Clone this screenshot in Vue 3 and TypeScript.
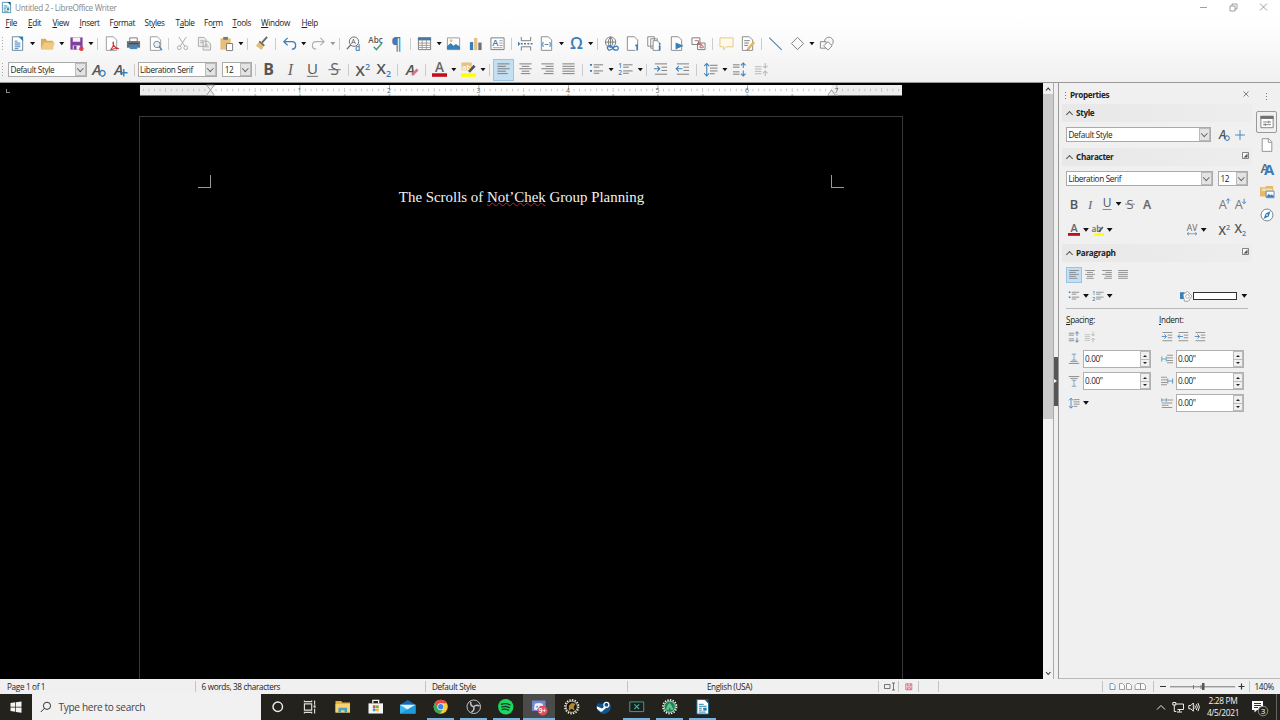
<template>
  <div class="desktop">
    <header class="chrome">
      <div class="title-bar">
        <svg class="app-icon" viewBox="0 0 16 16" v-html="icons.writer"></svg>
        <span class="title">Untitled 2 - LibreOffice Writer</span>
        <div class="window-buttons">
          <svg viewBox="0 0 10 10"><path d="M2 5.500h7" /></svg>
          <svg viewBox="0 0 10 10"><path d="M2 4h5v5h-5zM4 4V2h5v5H7" /></svg>
          <svg viewBox="0 0 10 10"><path d="M2 1.500l7 7M9 1.500l-7 7" /></svg>
        </div>
      </div>

      <nav class="menu-bar">
        <span v-for="menu in menus" :key="menu.label" :style="{ width: `${menu.width}px` }">
          {{ menu.label.slice(0, menu.key) }}<u>{{ menu.label[menu.key] }}</u>{{ menu.label.slice(menu.key + 1) }}
        </span>
      </nav>

      <div class="toolbar">
        <i class="grip"></i>
        <template v-for="(item, index) in standardBar" :key="index">
          <i v-if="item === '|'" class="separator"></i>
          <i v-else-if="item === 'v'" class="caret"></i>
          <i v-else-if="item === 'v-off'" class="caret off"></i>
          <button v-else class="tool"><svg viewBox="0 0 16 16" v-html="icons[item]"></svg></button>
        </template>
      </div>

      <div class="toolbar formatting">
        <i class="grip"></i>
        <div class="combo style-name"><span>Default Style</span><i></i></div>
        <button class="tool"><svg viewBox="0 0 16 16" v-html="icons.updateStyle"></svg></button>
        <button class="tool"><svg viewBox="0 0 16 16" v-html="icons.newStyle"></svg></button>
        <i class="separator"></i>
        <div class="combo font-name"><span>Liberation Serif</span><i></i></div>
        <div class="combo font-size"><span>12</span><i></i></div>
        <template v-for="(item, index) in formattingBar" :key="index">
          <i v-if="item === '|'" class="separator"></i>
          <i v-else-if="item === 'v'" class="caret"></i>
          <button v-else class="tool" :class="{ active: item === 'left' }">
            <svg viewBox="0 0 16 16" v-html="icons[item]"></svg>
          </button>
        </template>
      </div>
    </header>

    <main class="workspace">
      <section class="editor">
        <div class="ruler-row">
          <i class="tab-kind"></i>
          <svg class="ruler" width="762" height="12" viewBox="0 0 762 12">
            <rect width="762" height="10.500" fill="#ededed" />
            <rect x="70.500" width="621" height="10.500" fill="#fff" />
            <rect
              v-for="tick in ticks"
              :key="tick.x"
              :x="tick.x"
              :y="tick.top"
              width="0.800"
              :height="tick.height"
              :fill="tick.height > 4 ? '#999' : '#bdbdbd'"
            />
            <text v-for="n in 7" :key="n" :x="70 + n * inch" y="7.800">{{ n }}</text>
            <rect v-for="n in 14" :key="`t${n}`" :x="69.500 + n * inch / 2" y="9.500" width="2" height="1.500" fill="#999" />
            <path d="M66.500 0h8l-4 5zM66.500 10.500l4-5.500 4 5.500zM687.500 10.500l4-5.500 4 5.500z" fill="#eee" stroke="#888" stroke-width="0.800" />
          </svg>
        </div>
        <article class="page">
          <div class="margins"><i class="corner left"></i><i class="corner right"></i></div>
          <p class="paragraph">The Scrolls of <span class="misspelled">Not’Chek</span> Group Planning</p>
        </article>
      </section>

      <div class="scrollbar">
        <svg viewBox="0 0 10 10"><path d="M3 7l2.200-2.500L7.400 7" /></svg>
        <div class="thumb"></div>
        <div class="track"></div>
        <svg viewBox="0 0 10 10"><path d="M3 3.500l2.200 2.500 2.200-2.500" /></svg>
      </div>
      <div class="splitter"><i></i></div>

      <aside class="sidebar">
        <div class="deck-title"><i class="dots"></i><b>Properties</b><svg viewBox="0 0 8 8"><path d="M1.500 1.500l5 5M6.500 1.500l-5 5" /></svg></div>

        <h3><i class="chevron"></i>Style</h3>
        <div class="row fields">
          <div class="combo wide"><span>Default Style</span><i></i></div>
          <i class="spacer"></i>
          <button class="mini"><svg viewBox="0 0 16 16" v-html="icons.updateStyle"></svg></button>
          <button class="mini"><svg viewBox="0 0 16 16" v-html="icons.plus"></svg></button>
        </div>

        <h3 class="gap"><i class="chevron"></i>Character<svg class="launcher" viewBox="0 0 7 7" v-html="icons.launcher"></svg></h3>
        <div class="row fields">
          <div class="combo sidebar-font"><span>Liberation Serif</span><i></i></div>
          <i class="spacer"></i>
          <div class="combo font-size"><span>12</span><i></i></div>
        </div>
        <div v-for="(row, index) in characterRows" :key="index" class="row character">
          <template v-for="(item, i) in row" :key="i">
            <i v-if="item === ' '" class="spacer"></i>
            <i v-else-if="item === '_'" class="half"></i>
            <i v-else-if="item === 'v'" class="caret"></i>
            <button v-else class="mini"><svg viewBox="0 0 16 16" v-html="icons[item]"></svg></button>
          </template>
        </div>

        <h3 class="gap"><i class="chevron"></i>Paragraph<svg class="launcher" viewBox="0 0 7 7" v-html="icons.launcher"></svg></h3>
        <div class="row aligns">
          <button v-for="side in ['left', 'center', 'right', 'justify']" :key="side" class="mini" :class="{ active: side === 'left' }">
            <svg viewBox="0 0 16 16" v-html="icons[side]"></svg>
          </button>
        </div>
        <div class="row lists">
          <button class="mini"><svg viewBox="0 0 16 16" v-html="icons.bullets"></svg></button><i class="caret"></i>
          <button class="mini"><svg viewBox="0 0 16 16" v-html="icons.numbers"></svg></button><i class="caret"></i>
          <i class="spacer"></i>
          <button class="mini paint"><svg viewBox="0 0 16 16" v-html="icons.paint"></svg></button>
          <i class="swatch"></i>
          <i class="caret"></i>
        </div>
        <hr />
        <div class="columns">
          <div class="column">
            <label><u>S</u>pacing:</label>
            <div class="row steps">
              <button class="mini"><svg viewBox="0 0 16 16" v-html="icons.spaceUp"></svg></button>
              <button class="mini"><svg viewBox="0 0 16 16" v-html="icons.spaceDown"></svg></button>
            </div>
            <div v-for="icon in ['above', 'below']" :key="icon" class="row spin-row">
              <button class="mini"><svg viewBox="0 0 16 16" v-html="icons[icon]"></svg></button>
              <div class="spin"><span>0.00"</span><i></i></div>
            </div>
            <div class="row spin-row">
              <button class="mini"><svg viewBox="0 0 16 16" v-html="icons.lineSpacing"></svg></button><i class="caret"></i>
            </div>
          </div>
          <div class="column">
            <label><u>I</u>ndent:</label>
            <div class="row steps">
              <button v-for="(icon, i) in ['indent', 'outdent', 'indent']" :key="i" class="mini">
                <svg viewBox="0 0 16 16" v-html="icons[icon]"></svg>
              </button>
            </div>
            <div v-for="icon in ['before', 'after', 'firstLine']" :key="icon" class="row spin-row">
              <button class="mini"><svg viewBox="0 0 16 16" v-html="icons[icon]"></svg></button>
              <div class="spin"><span>0.00"</span><i></i></div>
            </div>
          </div>
        </div>
      </aside>

      <nav class="tabs">
        <i class="dots"></i>
        <button v-for="tab in tabs" :key="tab" :class="{ selected: tab === 'properties' }">
          <svg viewBox="0 0 16 16" v-html="icons[tab]"></svg>
        </button>
      </nav>
    </main>

    <footer class="status-bar">
      <span class="cell pages">Page 1 of 1</span>
      <span class="cell words">6 words, 38 characters</span>
      <span class="cell page-style">Default Style</span>
      <span class="cell language">English (USA)</span>
      <span class="cell insert"><svg width="12" height="9" viewBox="0 0 12 9"><path d="M.5 2.500h5.500v4H.5zM8 1h3M9.500 1v7M8 8h3" fill="none" stroke="#555" stroke-width=".8" /></svg></span>
      <span class="cell modified"><svg width="8" height="8" viewBox="0 0 8 8"><path d="M.8.8h6v6h-6zM2.500.8v2h3v-2M2.500 6.800v-2h3v2" fill="#f6d5da" stroke="#d1667b" stroke-width=".8" /></svg></span>
      <span class="cell signature"></span>
      <span class="cell filler"></span>
      <span class="cell views">
        <svg width="38" height="9" viewBox="0 0 38 9" fill="#fafafa" stroke="#888" stroke-width=".8">
          <path d="M1 1.500h3l2 2v4H1z" stroke="#4b83b5" />
          <path d="M10.500 1.500h3l2 2v4h-5zM17.500 1.500h3l2 2v4h-5zM26 3.500l2-2h3.500v6H26zM31.500 1.500h3l2 2v4h-5z" />
        </svg>
      </span>
      <span class="zoom">
        <svg width="84" height="9" viewBox="0 0 84 9">
          <path d="M0 4.500h6M78.500 4.500h6M81.500 1.500v6" stroke="#333" stroke-width="1.200" />
          <path d="M10 4.800h65M33.500 3v4M41 3v4" stroke="#777" />
          <rect x="42" y="1" width="2.500" height="7" fill="#555" />
        </svg>
      </span>
      <span class="cell percent">140%</span>
    </footer>

    <div class="taskbar">
      <div class="start"><svg viewBox="0 0 12 12"><path d="M.5 2l4.800-.7v4.400H.5zM6 1.200L11.500.4v5.300H6zM.5 6.400h4.800v4.400L.5 10.100zM6 6.400h5.500v5.300L6 10.900z" fill="#f4f4f4" /></svg></div>
      <div class="search">
        <svg viewBox="0 0 12 12"><circle cx="7" cy="4.800" r="3.600" /><path d="M4.400 7.400L.8 11" /></svg>
        <span>Type here to search</span>
      </div>
      <div v-for="app in apps" :key="app.name" class="task" :class="{ running: app.running, attention: app.name === 'discord' }">
        <svg viewBox="0 0 16 16" v-html="icons[app.name]"></svg>
      </div>
      <div class="tray">
        <svg class="tray-up" viewBox="0 0 12 12"><path d="M2 8.500L6 4.500 10 8.500" /></svg>
        <svg viewBox="0 0 12 12"><path d="M3.500 3h8v5.500h-6M7.500 8.500v2M5 11h5M.8 1.500h3v2.500h-3zM2.300 4v6.500h2" /></svg>
        <svg viewBox="0 0 12 12"><path d="M.8 4.500h2L5.300 2v8.200L2.800 7.800h-2zM6.800 4.500q1.200 1.600 0 3.300M8.300 3.200q2.200 2.900 0 5.800M9.900 2q3 4.100 0 8.200" /></svg>
        <div class="clock"><span>2:28 PM</span><span>4/5/2021</span></div>
        <svg class="notice" viewBox="0 0 18 18">
          <path d="M1 2h11v9H6l-2.500 2.500V11H1z" fill="#fff" stroke="none" />
          <path d="M3 4.500h7M3 6.500h7M3 8.500h4" stroke="#333" />
          <circle cx="12" cy="12" r="4.800" fill="#25241f" stroke="#aaa" stroke-width=".8" />
          <text x="12" y="14.800">3</text>
        </svg>
      </div>
    </div>
  </div>
</template>

<script setup lang="ts">
interface Menu {
  label: string;
  key: number;
  width: number;
}

interface App {
  name: string;
  running?: boolean;
}

const menus: Menu[] = [
  { label: 'File', key: 0, width: 22.5 },
  { label: 'Edit', key: 0, width: 24.5 },
  { label: 'View', key: 0, width: 27 },
  { label: 'Insert', key: 0, width: 30 },
  { label: 'Format', key: 1, width: 35 },
  { label: 'Styles', key: 2, width: 31 },
  { label: 'Table', key: 1, width: 28.5 },
  { label: 'Form', key: 2, width: 28.5 },
  { label: 'Tools', key: 0, width: 28.5 },
  { label: 'Window', key: 0, width: 40.5 },
  { label: 'Help', key: 0, width: 20 }
];

// '|' is a separator, 'v' a drop-down arrow
const standardBar = [
  'new', 'v', 'open', 'v', 'save', 'v', '|', 'pdf', 'print', 'preview', '|',
  'cut', 'copy', 'paste', 'v', '|', 'clone', '|', 'undo', 'v', 'redo', 'v-off', '|',
  'find', 'spelling', 'pilcrow', '|', 'table', 'v', 'image', 'chart', 'textbox', '|',
  'pageBreak', 'field', 'v', 'omega', 'v', '|', 'link', 'footnote', 'endnote', 'bookmark', 'crossRef', '|',
  'comment', 'track', '|', 'line', 'diamond', 'v', 'shapes'
];

const formattingBar = [
  '|', 'bold', 'italic', 'underline', 'strike', '|', 'sup', 'sub', '|', 'clear', '|',
  'fontColor', 'v', 'highlight', 'v', '|', 'left', 'center', 'right', 'justify', '|',
  'bullets', 'v', 'numbers', 'v', '|', 'indent', 'outdent', '|', 'lineSpacing', 'v', 'spaceUp', 'spaceDown'
];

const characterRows = [
  ['bold2', 'italic', 'underline', 'v', 'strike', 'shadow', ' ', 'grow', 'shrink'],
  ['fontColor', 'v', 'marker', 'v', ' ', 'kerning', 'v', '_', 'sup', 'sub']
];

const tabs = ['properties', 'blank', 'styles', 'gallery', 'navigator'];

const apps: App[] = [
  { name: 'cortana' },
  { name: 'taskView' },
  { name: 'explorer' },
  { name: 'store' },
  { name: 'mail' },
  { name: 'chrome', running: true },
  { name: 'obs', running: true },
  { name: 'spotify', running: true },
  { name: 'discord', running: true },
  { name: 'gearGold' },
  { name: 'steam' },
  { name: 'xbox', running: true },
  { name: 'gearGreen', running: true },
  { name: 'writer', running: true }
];

const inch = 89.5;

const ticks = Array.from({ length: 136 }, (_, i) => i - 12)
  .filter((n) => n !== 0)
  .map((n) => {
    const height = n % 16 === 0 ? 5 : n % 8 === 0 ? 4 : 2.5;
    return { x: 70 + (n * inch) / 16, height, top: n % 16 === 0 ? 0 : 5 - height / 2 };
  })
  .filter((tick) => tick.x > 1 && tick.x < 761);

const sheet = (stroke: string) =>
  `<path d="M2.500.8h7.500l3.500 3.500v11h-11z" fill="#fff" stroke="${stroke}" stroke-width="1"/>`;
const glyph = (char: string, x: number, y: number, size: number, fill = '#555', extra = '') =>
  `<text x="${x}" y="${y}" font-size="${size}" fill="${fill}" text-anchor="middle" ${extra}>${char}</text>`;
const lines = (d: string, stroke = '#777', width = 1) =>
  `<path d="${d}" fill="none" stroke="${stroke}" stroke-width="${width}"/>`;

const blue = '#3b7dba';
const semi = 'font-weight="600"';
const slanted = 'font-weight="600" font-style="italic"';
const gearTeeth = (stroke: string) =>
  `<circle cx="8" cy="8" r="7" fill="none" stroke="${stroke}" stroke-width="1.800" stroke-dasharray="1.400 1.350"/>`;

const icons: Record<string, string> = {
  writer: '<path d="M2 .5h8.500L14 4v11.500H2z" fill="#fff" stroke="#176a93"/><path d="M9.500 0H14v5z" fill="#16526f"/><path d="M4 5.500h5M4 7.500h8M4 9.500h3M4 11.500h3M4 13.500h7" stroke="#2580a8"/><path d="M8.500 9H12v3H8.500z" fill="#2580a8"/>',
  new: sheet('#64859a') + '<path d="M9 .5h5v5z" fill="#2980b5"/>' + lines('M5 5.500h3M5 7.500h6M5 9.500h6M5 11.500h6M5 13.500h4', blue),
  open: '<path d="M1 3h5l1.500 2H14v9H1z" fill="#d9ae62"/><path d="M4 7h12l-3 7.500H1z" fill="#f1c97f"/>',
  save: '<path d="M1.500 1.500h13v13h-13z" fill="#7e3f9d"/><path d="M4 1.500h8v4.500H4zM4 10h8v4.500H4z" fill="#f7f2fa"/><path d="M5 10.500h3v4H5z" fill="#7e3f9d"/><circle cx="13.200" cy="13.500" r="2.400" fill="#df3d42"/>',
  pdf: sheet('#999') + lines('M7 15c3-4 3.500-7 3-8.500-1.500 0 .5 7 6 7-3-1-7 .5-9 1.500z', '#cf3b3b', 1.1),
  print: '<path d="M4 2h8v4H4z" fill="#fff" stroke="#777"/><path d="M1 5.500h14v7H1z" fill="#66717d"/><path d="M4 10h8v4H4z" fill="#4188c5"/><path d="M3 8h10" stroke="#3d4b58"/>',
  preview: sheet('#999') + '<circle cx="9.500" cy="9" r="3.400" fill="#e9f2f8" stroke="#6d8ba0"/>' + lines('M12 11.500l3 3.500', '#4682b4', 1.4),
  cut: lines('M4 1l6.500 10M12 1L5.500 11', '#aaa') + '<circle cx="4.500" cy="12.500" r="2" fill="none" stroke="#aaa"/><circle cx="11.500" cy="12.500" r="2" fill="none" stroke="#aaa"/>',
  copy: '<path d="M1.500 1.500h6l2 2v7.500h-8zM6.500 5.500h5l3 3v6.500h-8z" fill="#eee" stroke="#aaa"/>' + lines('M3.500 5h3M3.500 7h3M8.500 9.500h3M8.500 11.500h4', '#aaa'),
  paste: '<path d="M1.500 2.500h11v12h-11z" fill="#e8bf79"/><path d="M4.500 1h5v3h-5z" fill="#777"/><path d="M8 8h6.500v7.500H8z" fill="#fff" stroke="#777"/>',
  clone: lines('M14 1L8.500 7', '#666', 2) + '<path d="M6 5.500l5 4.500-3 5-6-4.500z" fill="#e7bc73"/><path d="M6 5l5.500 4.500-1 1.500L5 6.500z" fill="#666"/>',
  undo: lines('M6 2L2 6l4 4M2.500 6h8q4 0 4 4v1q-.5 3-4 3', blue, 1.4),
  redo: lines('M10 2l4 4-4 4M13.500 6h-8q-4 0-4 4v1q.5 3 4 3', '#b0b0b0', 1.2),
  find: '<circle cx="8.500" cy="6" r="5" fill="none" stroke="#666"/>' + lines('M5 9.500L1 14', '#666', 1.4) + glyph('A', 7.8, 9, 8) + glyph('d', 12.5, 15.5, 9, blue, semi),
  spelling: glyph('Abc', 8, 7, 8.6, '#555', semi) + lines('M6 11.500l3 3L15 7.500', '#4aa079', 1.6),
  pilcrow: glyph('¶', 8, 13.5, 17, blue, semi),
  table: '<path d="M1.500 2h13v12.500h-13z" fill="#fff" stroke="#777"/><path d="M1 1.500h14v3.200H1z" fill="#4a779d"/>' + lines('M1.500 7.500h13M1.500 10h13M1.500 12.300h13M5.500 4v10.500M10 4v10.500', '#999'),
  image: '<path d="M1.500 2h13v12.500h-13z" fill="#fff" stroke="#999"/><path d="M1 14.500V11l4-3.500 3 3 2.500-2 4.500 3v3z" fill="#397fb8"/><circle cx="5.500" cy="5" r="1.500" fill="#ebc477"/>',
  chart: '<path d="M2 6.500h3.500V15H2z" fill="#377dbb"/><path d="M6.500 2H10v13H6.500z" fill="#e5c183"/><path d="M11 7h3.500v8H11z" fill="#707070"/>',
  textbox: '<path d="M1 2h14v12.500H1z" fill="#fff" stroke="#777"/>' + glyph('A', 5.8, 11, 10, blue, semi) + lines('M10 5h3.500M10 7.500h3.500M10 10h3.500M3 12.500h10', '#999'),
  pageBreak: lines('M3.500 1v4h10V1M3.500 15.500v-4h10v4', '#777') + lines('M3 8.300h2M6.500 8.300h2M10 8.300h2M13.500 8.300h2', blue, 1.6) + '<path d="M0 5.800l2.500 2.500L0 10.800z" fill="#3b7dba"/>',
  field: sheet('#888') + lines('M5 7H4v4h1M11 7h1v4h-1M6 9h4', blue),
  omega: glyph('Ω', 8, 14, 17.5, blue, semi),
  link: '<circle cx="7" cy="6.500" r="5.500" fill="none" stroke="#777"/>' + lines('M7 1v11M1.500 6.500h11M7 1Q2 6.500 7 12M7 1q5 5.500 0 11') + lines('M5 10.500q-3 2 0 4.500 2 .5 4-1.500 2-3 5-2.500 2.500 2 0 4-2 .5-4-1-1-3-5-3.500z', blue, 1.4),
  footnote: sheet('#888') + '<path d="M11 10h4v6h-4z" fill="#f7f7f7"/>' + lines('M11 10h2v5.500', blue, 1.8),
  endnote: '<path d="M.8.800h7v10h-7zM4 3h7v10H4z" fill="#fff" stroke="#888"/><path d="M6.500 5h4.500l2.500 2.500v7.800h-7z" fill="#fff" stroke="#888"/>' + lines('M13.500 10v5.500M13.500 7.500v1.500', blue, 1.8),
  bookmark: sheet('#888') + '<path d="M7 7l8.500 3.500L7 14.500z" fill="#397fb8"/>',
  crossRef: '<path d="M1 2h8.500v7H1zM7 7.500h8v7H7z" fill="#fff" stroke="#777"/>' + lines('M4 5h4v4h4M9.500 10.500h3.500v2h-3.500z', '#bd6265'),
  comment: '<path d="M1 2h14v9.500H8L5 14.800v-3.300H1z" fill="#fff9e9" stroke="#e5c57e"/>',
  track: sheet('#888') + lines('M4.500 5h6M4.500 7.500h5M4.500 10h4') + lines('M8.500 14L15 6.500', '#e4b566', 2.8) + lines('M7.500 15.200l1.200-1.400', '#a44'),
  line: '<path d="M1.700 1.200L15 14.500L14.200 15.300L.9 2z" fill="#4b80ac"/>',
  diamond: lines('M8 1.500l6.500 6.500L8 14.500 1.500 8z', '#777'),
  shapes: '<circle cx="10.500" cy="6" r="4.700" fill="#f7f7f7" stroke="#888"/><path d="M1.500 6h6v7h-6z" fill="#f7f7f7" stroke="#888"/><path d="M9.500 6l4.500 4.500L9.500 15 5 10.500z" fill="#fafafa" stroke="#888"/>',

  updateStyle: glyph('A', 6, 13.5, 16, '#555', slanted) + lines('M10 14.500q-2-3.500 1.500-5.500 4 0 3.500 4-2 3.500-4.500 1.500', blue, 1.4),
  newStyle: glyph('A', 6, 13.5, 16, '#555', slanted) + lines('M11.500 7.500v8M7.500 11.500h8', blue, 1.5),
  plus: lines('M8 1.500v13M1.500 8h13', blue, 1.2),
  bold: glyph('B', 8, 14, 17, '#555', 'font-weight="700"'),
  bold2: glyph('B', 8, 14, 17, '#555', semi),
  italic: '<text x="8" y="14" font-size="17" fill="#666" text-anchor="middle" class="serif" font-style="italic">I</text>',
  underline: glyph('U', 8, 12.5, 16, '#555') + lines('M2 15.300h12', '#666'),
  strike: glyph('S', 8, 14, 17, '#666') + lines('M1.500 8.200h13', '#666'),
  sup: glyph('X', 5.5, 14.5, 16, '#555', semi) + glyph('2', 13.3, 8, 9.5, blue, semi),
  sub: glyph('X', 5.5, 12.5, 16, '#555', semi) + glyph('2', 13.3, 15.5, 9.5, blue, semi),
  clear: glyph('A', 7, 13.5, 16, '#555', slanted) + lines('M8.500 14l6-6', '#dc7083', 2.8),
  fontColor: glyph('A', 8, 11, 14.5, '#666', semi) + '<path d="M0 12h16v3.800H0z" fill="#c0101e"/>',
  highlight: '<path d="M.5.500h11v8.500H.5z" fill="#e8c27c"/>' + glyph('ab', 6, 8, 8, '#fff', semi) + lines('M8.500 10.500L14.500 4', '#555', 2.8) + '<path d="M0 12h16v3.800H0z" fill="#ffff00"/>',
  left: lines('M1.500 2h13M1.500 4.600h9M1.500 7.200h13M1.500 9.800h9M1.500 12.400h11'),
  center: lines('M1.500 2h13M4 4.600h8M1.500 7.200h13M4 9.800h8M3 12.400h10'),
  right: lines('M1.500 2h13M6 4.600h8.500M1.500 7.200h13M6 9.800h8.500M4 12.400h10.500'),
  justify: lines('M1.500 2h13M1.500 4.600h13M1.500 7.200h13M1.500 9.800h13M1.500 12.400h13'),
  bullets: lines('M5 3h10M5 5.500h6M5 9.500h10M5 12h6') + lines('M1 3h2.200M1 9.500h2.200', blue, 2),
  numbers: lines('M5.500 3h10M5.500 5.500h6M5.500 9.500h10M5.500 12h6') + glyph('1', 2.3, 6.5, 7, blue, semi) + glyph('2', 2.3, 14, 7, blue, semi),
  indent: lines('M2 2h13M9 5.500h6M9 9h6M2 13h13') + lines('M1 7.300h6M4.500 4.500l2.800 2.800-2.800 2.800', blue, 1.1),
  outdent: lines('M2 2h13M9 5.500h6M9 9h6M2 13h13') + lines('M1 7.300h7M4 4.500L1.200 7.300 4 10.100', blue, 1.1),
  lineSpacing: lines('M7.500 3.500h8M7.500 6.500h8M7.500 9.500h8M7.500 12.500h5') + lines('M4 2v12.500M1.300 4.500L4 1.500l2.700 3M1.300 12L4 15l2.700-3', blue, 1.1),
  spaceUp: lines('M1 3h7M1 5.500h7M1 10.500h7M1 13h7') + lines('M12 1v5.500M9.500 3.500L12 1l2.500 2.500M12 9v6M9.500 12.500L12 15l2.500-2.500', blue, 1.1),
  spaceDown: lines('M1 5h7M1 7.500h7M1 10h7M1 12.500h7', '#b5b5b5') + lines('M12 1v5.500M9.500 4L12 6.500 14.500 4M12 15V9.500M9.500 12L12 9.500l2.500 2.500', '#b5b5b5', 1.1),

  marker: glyph('ab', 6, 10, 11, '#666', semi) + lines('M9 10.500l5.500-6.500', '#555', 2.2) + '<path d="M3 12h13v3.800H3z" fill="#ffff00"/>',
  shadow: glyph('A', 9, 14.5, 16, '#c4c4c4') + glyph('A', 8, 14, 16, '#666', semi),
  grow: glyph('A', 6.5, 14.5, 17, '#777') + lines('M13.500 7.500V1M11 3.500L13.500 1 16 3.500', blue, 1.2),
  shrink: glyph('A', 6.5, 14.5, 17, '#777') + lines('M13.500 1v6.500M11 5l2.500 2.500L16 5', blue, 1.2),
  kerning: glyph('AV', 8, 9, 11.5, '#666') + lines('M1.500 13h13M4 11l-2.500 2L4 15M12 11l2.500 2-2.500 2', blue, 0.9),
  launcher: '<path d="M.5.500h6v6h-6z" fill="#f8f8f8" stroke="#666" stroke-width=".8"/><path d="M1.500 5.500L5.500 1.500v4z" fill="#555"/>',
  paint: '<path d="M0 3h6v9H0z" fill="#397fb8"/><path d="M4 6l6-4 6 6-5 7H6z" fill="#fff" stroke="#888"/><circle cx="10" cy="8.500" r="2.500" fill="none" stroke="#999"/>',
  above: lines('M1 14h14M3 11.500h10') + lines('M5 1.500h6M8 1.500v8M5 9.500h6', '#6492b7'),
  below: lines('M1 2h14M3 4.500h10') + lines('M5 7h6M8 7v8M5 15h6', '#6492b7'),
  before: lines('M8 3h8M8 6.500h8M8 10h8M8 13h8') + lines('M1 4.500v7M7 4.500v7M1 8h6', '#5da1b5', 1.2),
  after: lines('M0 3h8M0 6.500h8M0 10h8M0 13h8') + lines('M9 4.500v7M15.500 4.500v7M9 8h6.500', '#5d91b5', 1.2),
  firstLine: lines('M8 4h8M1 8h14M1 11h9M1 14h14') + lines('M1 1.500v5M7 1.500v5M1 4h6', '#5d91b5', 1.1),

  properties: '<path d="M1 1.500h14v13H1z" fill="#fff" stroke="#777"/><path d="M.5 1h15v3.500H.5z" fill="#717171"/>' + lines('M3.500 8h9M3.500 11h9M10 6.500v3M6 9.500v3', '#777'),
  blank: sheet('#888') + lines('M9.500 1v4H13', '#888'),
  styles: glyph('A', 5.5, 12, 15, '#666', semi) + glyph('A', 10.5, 15, 17, blue, 'font-weight="700"'),
  gallery: '<path d="M0 2.500h6l1-1.500h8V13H0z" fill="#e5b969"/><path d="M2 4h12v3H2z" fill="#f5dcae"/><path d="M7 7h9v7.500H7z" fill="#fff" stroke="#4e82ad"/><path d="M7 14l3-4 2 2 1.500-1.500L16 13v1z" fill="#3b7dba"/>',
  navigator: '<circle cx="8" cy="8" r="6.800" fill="#fff" stroke="#6b7883"/><path d="M12 3.500l-2 6.300-6 2.700 2.500-6.300z" fill="#3481c1"/><circle cx="8" cy="8" r="1" fill="#fff"/>',

  cortana: '<circle cx="8" cy="8" r="4.900" fill="none" stroke="#eee" stroke-width="1.500"/>',
  taskView: '<path d="M2.500 5h7.500v6.500H2.500zM2.500 1.500v1.200H10V1.500M2.500 15v-1.200H10V15M13 1.500V6M13 10v5" fill="none" stroke="#ddd" stroke-width="1.200"/><path d="M12 6.500h2v2.500h-2z" fill="#ddd"/>',
  explorer: '<path d="M.5 2h6l1 1.500h8V14H.5z" fill="#e7ad2e"/><path d="M.5 5h15v9H.5z" fill="#f8d36b"/><path d="M3.500 14V9h9v5h-2.700v-2.500H6.200V14z" fill="#43a0d3"/>',
  store: '<path d="M.5 4.500h15V15H.5z" fill="#f5f5f5"/><path d="M5 4.500V1.300h6v3.200" fill="none" stroke="#f5f5f5" stroke-width="1.300"/><path d="M5 6.500h2.800v2.800H5z" fill="#e74b31"/><path d="M8.300 6.500h2.800v2.800H8.300z" fill="#7bae32"/><path d="M5 9.800h2.800v2.800H5z" fill="#2d9cd8"/><path d="M8.300 9.800h2.800v2.800H8.300z" fill="#f1b72a"/>',
  mail: '<path d="M0 6l8-5 8 5v9H0z" fill="#1669b6"/><path d="M0 6h16v9H0z" fill="#35b6ee"/><path d="M0 6h16l-8 5z" fill="#e0f3fc"/><path d="M0 15L16 6v9z" fill="#168fd3" fill-opacity=".7"/>',
  chrome: '<circle cx="8" cy="8" r="7.300" fill="#f8cd35"/><path d="M1.700 4.300A7.300 7.300 0 0 1 14.300 4.300H8l-3.200 5.500z" fill="#e84b3e"/><path d="M1.700 4.300A7.300 7.300 0 0 0 7 15.300l4-5.500H5z" fill="#37a85b"/><circle cx="8" cy="8" r="3.600" fill="#f4f4f4"/><circle cx="8" cy="8" r="2.800" fill="#3d85e9"/>',
  obs: '<circle cx="8" cy="8" r="7" fill="#272729" stroke="#c4c4c4"/>' + lines('M8 8Q4 7 5 3M8 8q3-3 6-.5M8 8q1 4-2.500 5.500', '#c4c4c4', 1.5),
  spotify: '<circle cx="8" cy="8" r="7.900" fill="#1ed760"/><path d="M3.500 5.400q5-1.500 9 .8M4 8.200q4.200-1.200 7.800.7M4.500 10.800q3.500-1 6.300.6" fill="none" stroke="#173c25" stroke-width="1.400" stroke-linecap="round"/>',
  discord: '<path d="M1 1.500h14V14L12 12.500H1z" fill="#7388cf"/><path d="M4 5q4-2 8 0l1 5.500-3 1-.5-1.500h-3L6 11.500l-3-1z" fill="#eef1ff"/><circle cx="6.300" cy="8" r="1" fill="#7388cf"/><circle cx="9.700" cy="8" r="1" fill="#7388cf"/><circle cx="12" cy="12" r="5" fill="#df5065"/>' + glyph('9+', 12, 14.5, 7, '#fff', semi),
  gearGold: gearTeeth('#f3eee0') + '<circle cx="8" cy="8" r="5.800" fill="#17150f" stroke="#e8dfc6" stroke-width=".8"/><path d="M5 12V7l3-3 4 1-2 3 1 4-3-2z" fill="#b28a37"/>',
  steam: '<circle cx="8" cy="8" r="7.400" fill="#12548a"/><path d="M1 4.500A7.400 7.400 0 0 1 15 6z" fill="#15293d"/><circle cx="10.700" cy="6" r="2.600" fill="none" stroke="#fff" stroke-width="1.300"/><path d="M.8 7.500l5.500 2.300 3-2.500 1 2-3 2.500q-2 2.500-4 0L1 10z" fill="#fff"/>',
  xbox: '<path d="M.8 3h14.400v10H.8z" fill="#17201e" stroke="#4d9c88"/>' + lines('M5.500 5.500l5 5M10.500 5.500l-5 5', '#53b198', 1.1),
  gearGreen: gearTeeth('#eef4ed') + '<circle cx="8" cy="8" r="5.800" fill="#188552" stroke="#d9e4dc" stroke-width=".8"/><path d="M4 11l2-5 2-2 2 3 2 4H9l-1-3-1 3z" fill="#63c491"/>'
};
</script>

<style>
body {
  margin: 0;
  overflow: hidden;
}

.desktop svg {
  overflow: visible;
}

.desktop svg text {
  font-family: 'Open Sans', sans-serif;
  letter-spacing: 0;
}

.desktop svg text.serif {
  font-family: 'Liberation Serif', serif;
}
</style>

<style scoped>
.desktop {
  width: 1280px;
  height: 720px;
  display: flex;
  flex-direction: column;
  overflow: hidden;
  background: #000;
  color: #222;
  font-family: 'Open Sans', 'Noto Sans', sans-serif;
  font-size: 8.2px;
  line-height: 10px;
  letter-spacing: -0.34px;
  white-space: nowrap;
}

.desktop * {
  box-sizing: border-box;
}

button {
  padding: 0;
  border: 0;
  background: none;
  display: flex;
  align-items: center;
  justify-content: center;
  flex: none;
}

svg {
  display: block;
  flex: none;
}

.chrome {
  height: 83px;
  flex: none;
  background: linear-gradient(#fff 15px, #fcfcfc 35px, #f0f0f0);
  border-bottom: 1px solid #999;
}

.title-bar {
  height: 15px;
  display: flex;
  align-items: center;
  padding-left: 1px;
  color: #888;
}

.app-icon {
  width: 11px;
  height: 11px;
  margin-right: 3px;
}

.window-buttons {
  margin-left: auto;
  padding-right: 12px;
  display: flex;
  gap: 20px;
}

.window-buttons svg {
  width: 10px;
  height: 10px;
  margin-top: -2px;
  fill: none;
  stroke: #888;
  stroke-width: 0.8;
}

.menu-bar {
  height: 15px;
  display: flex;
  align-items: center;
  padding-left: 5.5px;
}

.menu-bar span {
  flex: none;
}

u {
  text-underline-offset: 1px;
  text-decoration-thickness: 0.7px;
}

.toolbar {
  height: 27px;
  display: flex;
  align-items: center;
}

.toolbar.formatting {
  height: 25px;
}

.grip {
  width: 7.1px;
  height: 16px;
  flex: none;
  background: radial-gradient(circle, #aaa 0.6px, transparent 0.9px) 1px 0 / 3px 3px repeat-y;
}

.tool {
  width: 21.8px;
  height: 22px;
}

.tool svg {
  width: 15px;
  height: 15px;
}

.active {
  background: #c5dff2;
  outline: 1px solid #9ac5e5;
  outline-offset: -1px;
}

.caret {
  width: 7.4px;
  height: 4px;
  flex: none;
  background: #111;
  clip-path: polygon(0.8px 0, 6.6px 0, 3.7px 3.8px);
}

.caret.off {
  background: #999;
}

.separator {
  width: 5.9px;
  height: 12px;
  flex: none;
  background: linear-gradient(#ccc, #ccc) center / 1px 100% no-repeat;
}

.combo {
  height: 15px;
  flex: none;
  display: flex;
  border: 1px solid #aaa;
  background: #fff;
  align-items: center;
  padding-left: 1.5px;
}

.combo span {
  flex: 1;
}

.combo i {
  width: 11px;
  height: 100%;
  display: flex;
  align-items: center;
  justify-content: center;
  background: #e3e3e3;
  border: 1px solid #bbb;
}

.combo i::after {
  content: '';
  width: 3.5px;
  height: 3.5px;
  margin-top: -2px;
  border: solid #666;
  border-width: 0 1px 1px 0;
  transform: rotate(45deg);
}

.style-name {
  width: 79px;
  margin: 0 1px;
}

.font-name {
  width: 79px;
}

.font-size {
  width: 30px;
}

.toolbar .font-size {
  margin-left: 5.6px;
}

.workspace {
  height: 596px;
  flex: none;
  display: flex;
}

.editor {
  width: 1043px;
  display: flex;
  flex-direction: column;
  overflow: hidden;
  background: #000;
}

.ruler-row {
  height: 33px;
  flex: none;
  display: flex;
  padding-top: 2px;
}

.tab-kind {
  width: 4px;
  height: 4px;
  margin: 4px 130px 0 6px;
  border: solid #888;
  border-width: 0 0 1px 1px;
}

.ruler text {
  font-size: 7px;
  fill: #666;
  text-anchor: middle;
}

.page {
  width: 764px;
  flex: 1;
  margin-left: 139px;
  border: solid #383838;
  border-width: 1px 1px 0;
}

.margins {
  display: flex;
  justify-content: space-between;
  padding: 58px 58px 0;
}

.corner {
  width: 13px;
  height: 13px;
  border: solid #999;
  border-width: 0 0 1px;
}

.corner.left {
  border-right-width: 1px;
}

.corner.right {
  border-left-width: 1px;
}

.paragraph {
  margin: 0;
  padding-left: 1px;
  color: #f2f2f2;
  font: 14.9px/18px 'Liberation Serif', serif;
  letter-spacing: 0;
  text-align: center;
}

.misspelled {
  text-decoration: underline wavy #b3262c 0.6px;
  text-underline-offset: 0;
}

.scrollbar {
  width: 10px;
  display: flex;
  flex-direction: column;
  background: #f1f1f1;
}

.scrollbar svg {
  width: 10px;
  height: 11px;
  fill: none;
  stroke: #333;
  stroke-width: 1.1;
}

.thumb {
  height: 325px;
  background: #cacaca;
}

.track {
  flex: 1;
}

.splitter {
  width: 6px;
  display: flex;
  align-items: center;
  background: #f0f0f0;
  border-left: 1px solid #aaa;
  border-right: 1px solid #999;
}

.splitter i {
  width: 4px;
  height: 49px;
  background: #555;
  display: flex;
  align-items: center;
}

.splitter i::after {
  content: '';
  border: solid transparent;
  border-width: 2.5px 0 2.5px 3px;
  border-left-color: #fff;
}

.sidebar {
  width: 194px;
  padding: 0 1px 0 3px;
  background: #f0f0f0;
  border-bottom: 1px solid #bbb;
}

.deck-title {
  height: 21px;
  display: flex;
  align-items: center;
  padding: 3px 2px 0 2px;
}

.deck-title b {
  flex: 1;
  margin-left: 3px;
}

.deck-title svg {
  width: 8px;
  height: 8px;
  margin-top: -3px;
  stroke: #666;
  stroke-width: 0.8;
}

.dots {
  width: 3px;
  height: 9px;
  background: radial-gradient(circle, #777 0.6px, transparent 0.9px) 0 0 / 3px 3px;
}

h3 {
  height: 18px;
  margin: 0;
  padding: 0 3px 0 4px;
  display: flex;
  align-items: center;
  font-size: 8.2px;
  background: linear-gradient(90deg, #e8e8e8, #ededed);
}

h3.gap {
  margin-top: 1px;
}

.chevron {
  width: 5px;
  height: 5px;
  margin: 3px 4px 0 1px;
  border: solid #555;
  border-width: 1px 0 0 1px;
  transform: rotate(45deg);
}

.launcher {
  width: 7px;
  height: 7px;
  margin: -3px 0 0 auto;
}

.row {
  display: flex;
  align-items: center;
}

.sidebar > .row {
  padding: 0 4px;
}

.row.fields {
  height: 25px;
}

.row.character {
  height: 26px;
}

.row.aligns {
  height: 25px;
}

.row.lists {
  height: 18px;
}

.wide {
  width: 145px;
}

.sidebar-font {
  width: 147px;
}

.spacer {
  flex: 1;
}

.half {
  width: 8px;
}

.mini {
  width: 16.3px;
  height: 16px;
}

.mini svg {
  width: 12px;
  height: 12px;
}

.paint {
  width: 14px;
}

.swatch {
  width: 44px;
  height: 8px;
  margin-right: 4px;
  background: #fff;
  border: 1px solid #333;
}

hr {
  height: 1px;
  margin: 3px 4px 2px;
  border: 0;
  background: #bbb;
}

.columns {
  display: flex;
  padding-left: 4px;
}

.column {
  width: 93.5px;
}

.column label {
  height: 17px;
  display: flex;
  align-items: center;
}

.row.steps {
  height: 20px;
  padding-bottom: 2px;
}

.spin-row {
  height: 22px;
}

.spin {
  width: 68px;
  height: 18px;
  margin-left: 0.7px;
  display: flex;
  align-items: center;
  padding-left: 1px;
  background: #fff;
  border: 1px solid #b0b0b0;
}

.spin span {
  flex: 1;
}

.spin i {
  width: 10px;
  height: 100%;
  display: flex;
  flex-direction: column;
  align-items: center;
  justify-content: space-around;
  border: 1px solid #bbb;
  background: linear-gradient(#bbb, #bbb) center / 100% 1px no-repeat #f0f0f0;
}

.spin i::before,
.spin i::after {
  content: '';
  border: solid transparent;
  border-width: 0 2px 2.5px;
  border-bottom-color: #222;
}

.spin i::after {
  transform: rotate(180deg);
}

.tabs {
  width: 27px;
  display: flex;
  flex-direction: column;
  align-items: center;
  background: #f0f0f0;
  border-bottom: 1px solid #bbb;
}

.tabs .dots {
  margin: 9px 0 10px;
}

.tabs button {
  width: 21px;
  height: 22px;
  margin-bottom: 1.3px;
}

.tabs button.selected {
  border: 1px solid #999;
  border-radius: 2px;
}

.tabs svg {
  width: 14px;
  height: 14px;
}

.status-bar {
  height: 15px;
  flex: none;
  display: flex;
  align-items: center;
  background: #f0f0f0;
}

.cell {
  height: 11px;
  padding-left: 6px;
  display: flex;
  align-items: center;
  border-left: 1px solid #c4c4c4;
}

.pages {
  width: 194.5px;
  border-left: 0;
  padding-left: 7px;
}

.words {
  width: 230.5px;
}

.page-style {
  width: 201.5px;
}

.language {
  width: 251px;
  padding: 0;
  justify-content: center;
  padding-right: 46px;
}

.insert {
  width: 20px;
  padding-left: 5px;
}

.modified {
  width: 20px;
}

.signature {
  width: 20px;
}

.filler {
  width: 164px;
}

.views {
  width: 51px;
}

.zoom {
  height: 11px;
  padding-left: 6px;
  border-left: 1px solid #c4c4c4;
  display: flex;
  align-items: center;
  width: 96px;
}

.percent {
  padding-left: 5px;
}

.taskbar {
  height: 26px;
  flex: none;
  display: flex;
  background: #23221d;
}

.start {
  width: 32px;
  display: flex;
  align-items: center;
  justify-content: center;
}

.start svg {
  width: 12px;
  height: 12px;
}

.search {
  width: 229px;
  display: flex;
  align-items: center;
  padding-left: 7.5px;
  gap: 7px;
  background: #f1f1f1;
  color: #444;
  font-size: 10.1px;
  letter-spacing: -0.33px;
}

.search svg {
  width: 12px;
  height: 12px;
  fill: none;
  stroke: #333;
}

.task {
  width: 32.7px;
  display: flex;
  align-items: center;
  justify-content: center;
}

.task svg {
  width: 15.5px;
  height: 15.5px;
}

.running {
  background: linear-gradient(#74b4e4, #74b4e4) center bottom / 27px 2px no-repeat;
}

.attention {
  background: linear-gradient(#74b4e4, #74b4e4) center bottom / 32px 2px no-repeat #4b4b49;
}

.tray {
  flex: 1;
  display: flex;
  align-items: center;
  justify-content: flex-end;
  gap: 4px;
  margin-right: 3px;
  padding-right: 7px;
  border-right: 1px solid #666;
}

.tray svg {
  width: 12px;
  height: 12px;
  fill: none;
  stroke: #eee;
}

.tray .tray-up {
  margin-right: 1px;
}

.clock {
  width: 40px;
  display: flex;
  flex-direction: column;
  align-items: center;
  gap: 1.5px;
  margin: 0 0 0 -1px;
  color: #f5f5f5;
  font-size: 8.3px;
  letter-spacing: -0.3px;
}

.tray .notice {
  width: 18px;
  height: 18px;
  margin: 2px 0 0 4px;
}

.tray .notice text {
  font-size: 8px;
  fill: #fff;
  stroke: none;
  text-anchor: middle;
}
</style>
